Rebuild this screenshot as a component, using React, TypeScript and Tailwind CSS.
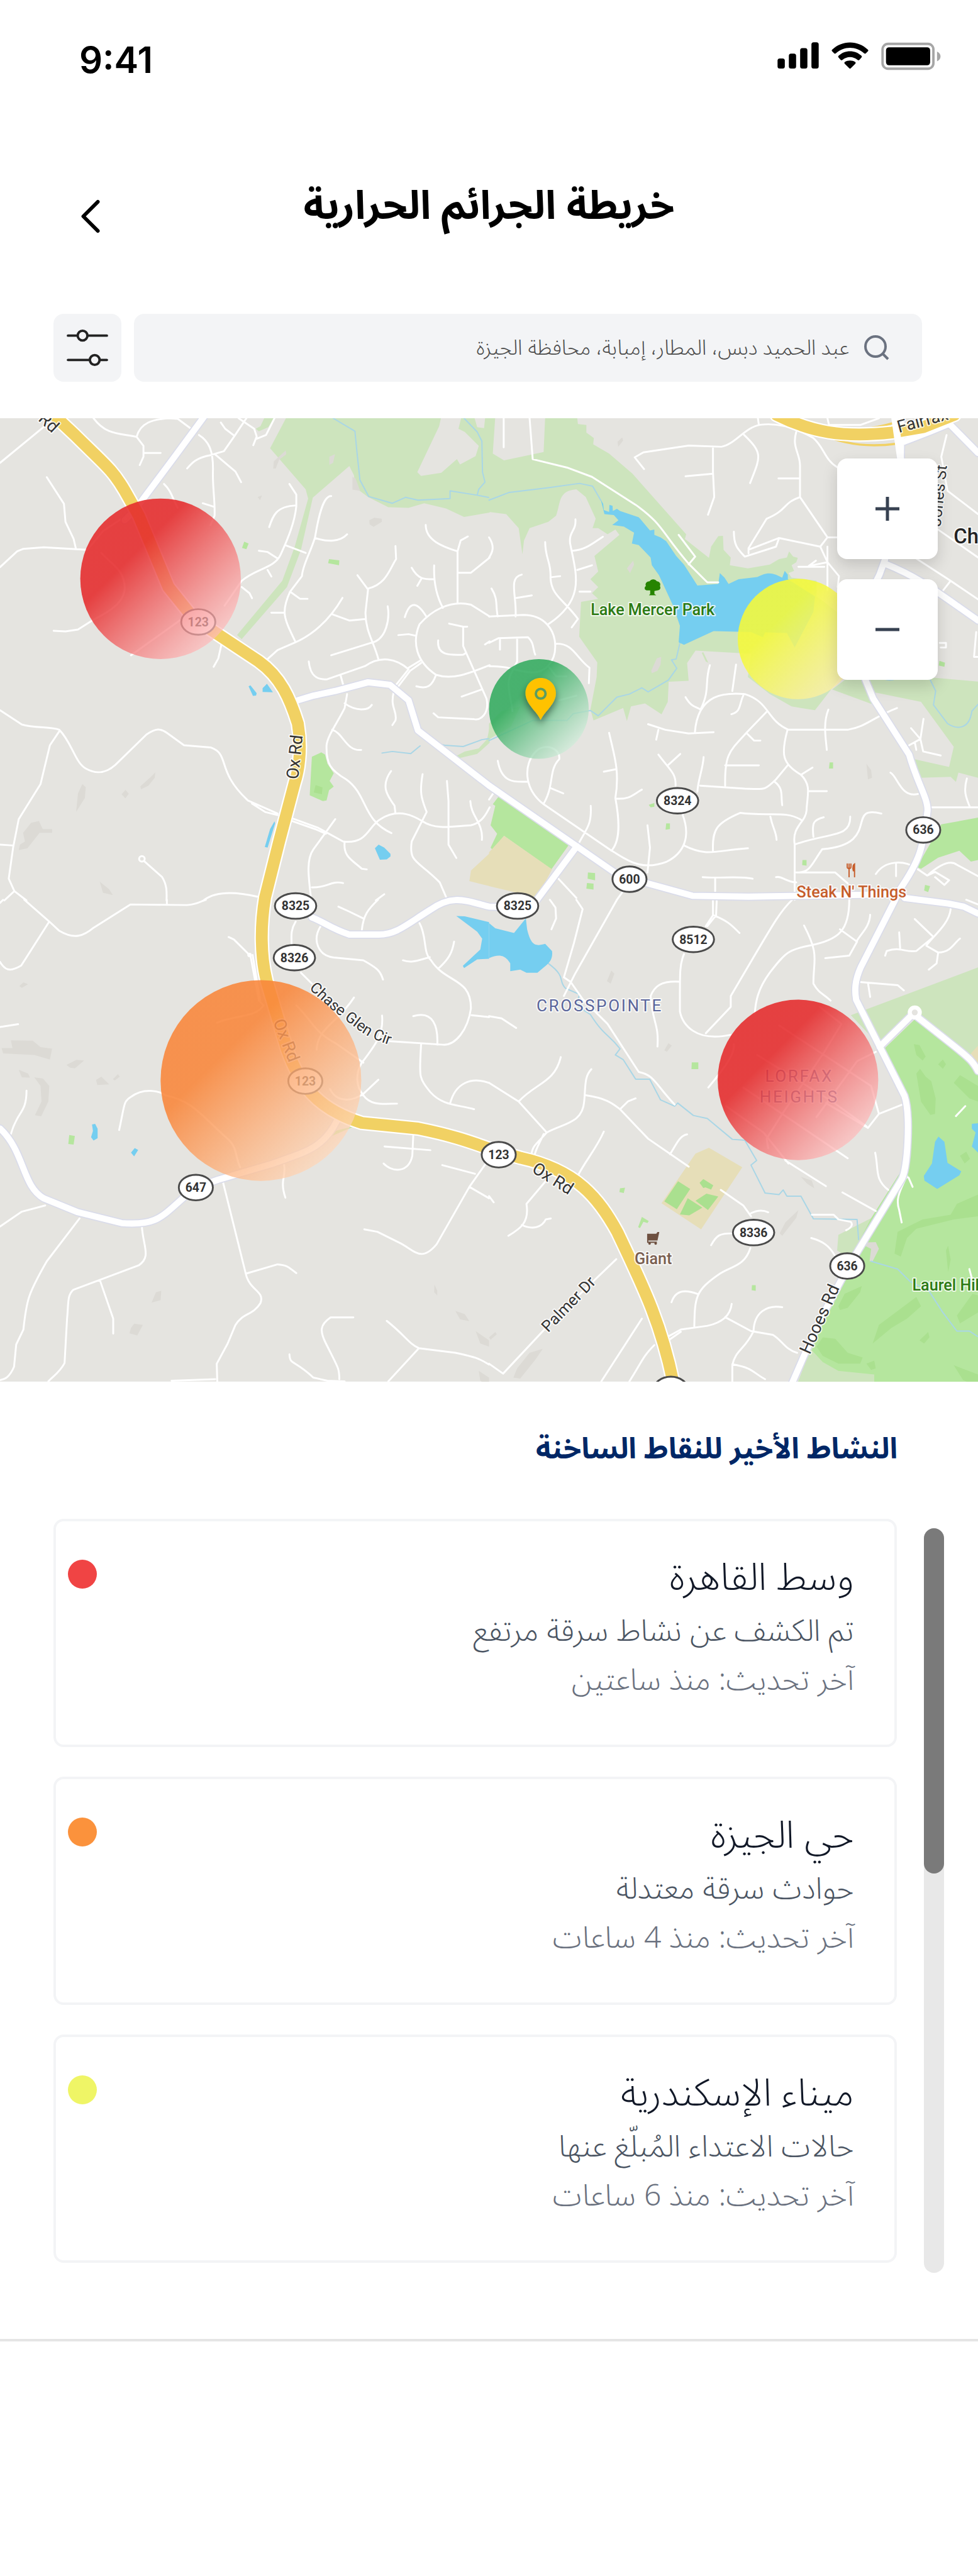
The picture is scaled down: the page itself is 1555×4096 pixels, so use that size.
import React from "react";

/* ---------- Map data: four tiles, each 1568 x 1568 units ---------- */

type Tile = {
  park?: string[];
  grass?: string[];
  grassDark?: string[];
  sand?: string[];
  land?: string[];
  water?: string[];
  stream?: string[];
  building?: string[];
  road?: string[];
};

const TILES: { x: number; y: number; t: Tile }[] = [
  {
    x: 0,
    y: 0,
    t: {
      park: [
        "M920 10L866 113L980 245L988 275L945 430L905 540L760 715L775 728L920 560L965 440L1003 272L1120 170L1135 200L1140 240L1180 270L1245 303L1310 305L1360 290L1430 307L1488 334L1570 320V10Z",
        "M850 10L835 42L820 50L830 58L860 45L882 10Z",
        "M1570 1010L1562 1050L1535 1080L1490 1090L1462 1105L1470 1112L1530 1098L1570 1062Z",
      ],
      land: [
        "M1415 10L1408 42L1338 190L1350 202L1415 192L1465 148L1475 165L1525 138L1535 105L1490 60L1470 50L1480 10Z",
        "M1520 10L1530 45L1552 48L1556 10Z",
      ],
      grass: [
        "M1000 1107L1030 1093L1042 1100L1050 1130L1070 1160L1057 1185L1070 1203L1055 1215L1047 1248L1035 1250L993 1231Z",
        "M783 414L797 420L790 438L776 434Z",
        "M1055 470L1088 474L1087 490L1052 483Z",
      ],
      grassDark: ["M1012 1198L1034 1206L1032 1228L1006 1222Z"],
      sand: ["M1570 1418L1510 1474L1505 1508L1570 1524Z"],
      water: [
        "M797 880L803 877L823 902L821 910L811 911Z",
        "M842 898V886L856 872L875 899Z",
        "M880 1315L866 1340L849 1398L858 1400L882 1322Z",
        "M1202 1402L1214 1390L1232 1400L1252 1420V1428L1240 1438L1218 1439Z",
      ],
      stream: [
        "M1068 16L1138 58L1144 120L1154 215L1182 268L1258 290L1300 271L1340 280L1443 275V250L1530 264L1535 245L1555 222L1547 190L1545 90L1530 60L1488 16",
        "M1530 264L1570 272",
        "M1225 1095L1258 1090L1317 1097L1347 1072",
        "M1395 1062L1425 1070L1485 1074L1545 1052L1570 1048",
      ],
      building: [
        "M878 155L916 120L918 132L895 150L884 178L876 178Z",
        "M1184 345L1200 337L1224 340V350L1198 366L1185 358Z",
        "M264 1195L275 1205L272 1240L244 1285L250 1225Z",
        "M450 1202L486 1170L498 1157L496 1175L476 1200L452 1212Z",
        "M390 1228L402 1214L413 1226L402 1241Z",
        "M100 1320L125 1314L137 1340L167 1340V1352L127 1352L88 1402L60 1408L64 1390L80 1380L74 1352Z",
        "M320 1510L350 1534L362 1553L330 1545Z",
        "M1130 205L1140 210L1155 250L1130 246Z",
        "M1056 140L1074 132L1068 160L1056 166Z",
        "M826 270L840 265L834 280Z",
      ],
      road: [
        "M0 160L145 40",
        "M300 16C340 70 380 64 438 76C450 30 490 20 540 16L570 18L610 48",
        "M438 76L460 105V140L448 167M460 128H515",
        "M708 30L722 50L752 73",
        "M790 16L752 73L718 122L675 135C630 143 615 160 600 178",
        "M638 70C670 90 683 120 683 180C680 230 690 280 688 330L675 360",
        "M650 290L688 302",
        "M690 133L755 188L773 222",
        "M765 16L815 50L823 75L812 103M880 16L853 70L823 82",
        "M150 206L205 292L210 350L236 405L243 435",
        "M0 496L55 445L75 437L140 432L280 440",
        "M172 701L210 703L250 697L300 665C350 640 400 610 400 560C395 500 360 490 325 450M280 440L330 380L420 320",
        "M526 228C550 250 555 280 570 305",
        "M710 745L700 790L685 817",
        "M420 780L580 665",
        "M928 228L950 262V300C945 350 925 400 900 455C880 500 820 500 775 540M863 367C875 330 885 300 950 297M830 443L858 447L890 468M858 505L870 526",
        "M775 560L800 580L808 596",
        "M720 620L775 540",
        "M1062 267C1035 265 1020 340 1010 400C995 450 970 490 968 525L930 575C900 640 910 660 948 738",
        "M1010 402C1050 415 1090 415 1113 390M930 575L962 598H986M870 643H908M915 425L980 450",
        "M858 792L890 763L948 738C1010 710 1060 660 1098 595",
        "M1066 648L1120 668L1172 663M1062 780L1190 740C1240 730 1250 660 1243 622",
        "M1146 522L1180 568L1172 640C1170 700 1200 740 1213 792",
        "M1180 565C1240 550 1250 500 1270 470L1268 428",
        "M990 800C995 850 1020 860 1050 857L1170 815C1220 780 1270 790 1310 825",
        "M1092 845L1103 885",
        "M1365 360C1365 410 1420 430 1467 445V612M1467 445L1477 410L1500 397M1467 514H1510L1570 465",
        "M1392 490C1390 540 1400 590 1420 627M1320 498C1340 535 1360 535 1390 535M1352 532L1338 556",
        "M1298 657C1315 600 1340 610 1368 657",
        "M1570 655L1510 617C1440 600 1380 640 1345 680C1320 740 1335 800 1398 843C1450 860 1500 840 1570 812",
        "M1277 715L1310 712L1333 717M1440 678L1485 688H1498M1485 688V750L1560 920C1570 970 1540 990 1520 986L1405 980L1390 967",
        "M1405 732C1400 780 1440 780 1485 778L1495 772M1555 745L1570 735",
        "M1310 825L1270 875M1348 797L1310 820M1350 805L1315 830L1277 880M1398 843C1385 880 1370 890 1335 880M1480 913L1545 890",
        "M1262 900C1250 950 1275 960 1268 990L1258 1005",
        "M1113 905L1105 950C1080 1000 1050 1040 1047 1070C1045 1130 1060 1150 1110 1180C1180 1230 1160 1310 1255 1353",
        "M1105 935C1140 960 1180 960 1192 940M1065 1020C1100 1030 1110 1090 1158 1085",
        "M0 957L70 1003C110 1015 165 1010 190 1020C230 1060 240 1125 275 1145C310 1165 340 1160 370 1133L470 1035C500 1015 515 1015 535 1030L590 1070L675 1077C740 1100 690 1150 795 1248L890 1290",
        "M935 1305L1018 1335L1100 1380C1180 1390 1180 1330 1220 1308C1280 1270 1330 1300 1355 1315C1400 1345 1460 1330 1510 1328C1545 1320 1560 1290 1570 1270",
        "M808 1258L850 1285L890 1295M930 1312L1010 1340L1045 1355",
        "M190 1025L160 1070L130 1195L60 1308L42 1400L28 1500L46 1540L85 1570M46 1540L14 1570M0 1390L42 1393",
        "M463 1444L520 1495C535 1520 535 1540 534 1570",
        "M1075 1308L1045 1350L1005 1405C980 1440 990 1500 998 1570M1000 1528C1050 1530 1060 1505 1100 1514",
        "M1105 1382C1100 1430 1130 1440 1160 1468L1176 1470",
        "M1254 1153C1220 1200 1240 1230 1265 1265L1268 1290M1355 1163C1345 1220 1350 1240 1368 1285L1320 1380C1310 1450 1340 1440 1410 1512L1435 1570",
        "M1433 1185L1438 1250V1390L1463 1433M1508 1250C1510 1300 1550 1320 1545 1375",
        "M655 1568C700 1535 770 1545 825 1558M1232 1550L1205 1570",
      ],
    },
  },
  {
    x: 1568,
    y: 0,
    t: {
      park: [
        "M0 10H20L12 130L48 152L175 125L180 10H282L285 35L312 38V62L336 80L334 100L385 130L460 195L632 390L628 405L705 466L712 430L735 396L750 395L752 440L775 465L772 490L830 500L900 488L930 470L955 465L962 445L975 462L990 466L985 480L970 490L978 508L960 515L970 530L1050 540V590L1180 690L1120 860L1045 957L970 945L900 905L830 850L840 775L662 765L635 805L640 862L576 865L573 930L553 970L500 935L455 945L442 992L430 950L335 990L325 955L345 850L347 803L289 720L295 608L350 598L330 580L350 560L325 535L350 510L338 460L418 392L405 375L380 390L350 370L332 370L342 340L310 270L280 245C220 250 230 290 215 330L190 350L130 370L112 410L107 455L95 370L55 325L0 318Z",
        "M1100 890L1180 830L1380 848L1568 865V1175L1505 1158L1497 1188L1480 1172L1380 1175L1365 1115L1475 1140L1490 1075L1385 930L1240 900L1230 938Z",
        "M0 1000L40 960L100 945L70 1010L0 1050Z",
        "M687 770L703 804L695 800L682 772Z",
      ],
      land: ["M185 10L137 66V50L150 40V10Z"],
      grass: [
        "M30 1236L255 1392L200 1470L48 1362L12 1408L5 1400L26 1355L5 1328L20 1265L12 1260Z",
        "M1450 1325L1568 1303V1440L1545 1445L1508 1410L1440 1432L1385 1468L1372 1462Z",
        "M1444 798L1462 804L1460 817L1442 813Z",
        "M1092 1125H1103V1145H1090Z",
        "M568 1322H580V1340L566 1342Z",
        "M317 1480L340 1482V1505L316 1500ZM314 1514L335 1516V1535L312 1532ZM10 1422L33 1430L22 1448L6 1440Z",
        "M1005 1440H1018V1458L1004 1456ZM1398 1520L1414 1524L1408 1543L1395 1538Z",
        "M512 1262L530 1256V1268L518 1270Z",
      ],
      sand: ["M48 1362L202 1470L150 1568L100 1548L0 1524V1415Z"],
      water: [
        "M358 278L366 292L368 312L385 318L386 295L396 298L397 315L410 308L420 315L480 335L516 378L530 375L530 392L550 400L568 412L600 460L625 488L668 555L735 550L740 515L755 530L768 550L800 535L860 528C900 505 920 520 940 530L948 508L958 520V535L1045 590L1040 640L980 755L955 708L885 706L878 722L840 705L720 702L625 746L608 738L612 685L590 620L545 522L522 490L518 465L480 425L458 420L465 385L432 365L395 360L415 345L400 328L370 325Z",
      ],
      stream: [
        "M0 280L65 255L190 240L290 226L332 235L358 280M612 740L600 792L585 795L602 822L575 860L510 898L490 885L450 905L410 915L350 975L325 958L270 968L250 990H140L0 1055",
        "M1415 860L1432 895L1425 940L1470 1000C1500 1020 1540 1020 1548 960L1568 938",
        "M1250 850C1280 865 1300 860 1310 850",
      ],
      building: [
        "M412 92L427 78L430 88L414 108Z",
        "M442 500L462 475L465 488L452 515Z",
        "M520 830L538 790L552 785L550 810L540 830L522 838Z",
        "M1210 1130L1225 1150L1228 1175L1215 1180Z",
      ],
      road: [
        "M47 16V110M130 16L140 148L250 175L330 205L470 295C560 360 550 380 640 485L700 545H735",
        "M608 392L661 462L640 487",
        "M497 180L467 142L495 126L640 104L745 108C790 100 820 45 870 37C930 30 990 50 1040 80C1075 110 1075 150 1118 175",
        "M865 37L862 16M818 70C880 130 870 140 837 225M718 108V190L722 270L702 327M630 203L718 195M985 60C970 110 998 130 997 170V270L1085 400H1118M928 210H995",
        "M997 270C940 290 960 310 890 340L832 435V452M785 382C785 430 800 440 820 462L920 430L930 402L832 440M930 402L1062 430L1085 400",
        "M1062 430L1085 480V570M1085 430V480L1122 525L1118 560M1085 480L1025 492L1048 475M992 495H1075",
        "M277 342C280 380 255 380 260 420C280 520 310 600 190 680M180 415C180 470 200 480 197 530C200 590 240 600 285 663L265 690M268 443C310 440 330 420 365 398M283 505L330 490M290 575L325 575M202 528L228 525M105 520C60 530 90 590 85 655M88 595L137 587M8 565C30 600 20 620 28 655",
        "M0 655L110 650C180 650 210 700 212 745C215 800 180 840 130 835C80 830 70 815 0 815M0 740L30 725L125 722C145 740 140 760 148 778M35 730V762M90 725V800L75 830C50 870 70 910 75 960",
        "M215 743C270 740 280 790 322 820L320 870M190 815L215 848H248M225 925L280 910",
        "M0 400C20 430 10 450 0 465",
        "M510 1002L565 1020L640 1032L720 1028M543 1020L536 1052M660 1028C670 900 760 900 820 905C900 930 890 990 960 1020H1150C1210 1010 1230 980 1308 950M708 812C690 870 710 890 678 955M630 915C650 950 665 945 678 955M792 810L780 895M817 905C800 940 810 960 777 970",
        "M892 960L825 1030C770 1090 755 1100 757 1200M825 1030L850 1055H870M757 1135H865M1088 955C1070 1000 1080 1050 1083 1085",
        "M957 1020C935 1100 940 1130 1000 1165C1035 1200 1020 1230 1018 1280C1015 1320 970 1330 980 1390V1568M957 1135L920 1180C880 1220 880 1210 820 1210L677 1200M1000 1165L1037 1142M1023 1218H1083M915 1187C945 1210 935 1230 940 1263",
        "M385 1030C400 1100 420 1150 405 1240C420 1320 420 1380 392 1410M368 1155L408 1147M408 1242C450 1245 460 1230 490 1213M543 1100C580 1150 600 1160 598 1200M575 1133L613 1098M688 1108C685 1150 670 1180 668 1220M620 1292C650 1370 620 1420 570 1445C480 1480 430 1430 390 1408L175 1260C110 1210 110 1130 150 1090C180 1060 230 1080 225 1115C190 1150 210 1200 175 1258M28 1120C40 1190 80 1190 125 1187M197 1208L238 1225",
        "M326 1265C330 1330 310 1340 283 1395M508 1328L516 1400L508 1480M625 1393C700 1430 720 1410 830 1402M718 1412C715 1340 730 1320 805 1288C900 1300 950 1280 1000 1310M902 1300C910 1340 920 1345 922 1375",
        "M980 1390C1090 1350 1160 1370 1158 1300M1040 1365C1035 1320 1040 1310 1073 1302M1258 1290C1140 1260 1260 1390 1068 1405C1030 1460 1030 1480 985 1480H1110L1150 1515M685 1495C740 1500 800 1490 845 1500M725 1500V1540M920 1495C940 1490 950 1510 985 1512",
        "M1240 1485C1270 1440 1330 1440 1368 1465M1305 1450V1492M1368 1465L1405 1490C1450 1450 1480 1440 1500 1455L1568 1492M1405 1490L1430 1478L1475 1505L1460 1520L1430 1495M0 1245L20 1215M215 1492L280 1562M430 1540L410 1568",
        "M1287 1158C1310 1170 1320 1240 1375 1227M1532 1177C1520 1220 1530 1240 1542 1270M1420 1270H1568M1393 985L1383 1050L1392 1090L1448 1103M1353 1015L1383 1050L1347 1070M1365 1060L1370 1085",
        "M1467 70L1450 140L1470 250L1568 325M1440 375L1568 465M1368 467L1480 540L1568 600M1480 540L1455 572M1445 740H1465V755H1448M1562 705L1555 785H1568",
        "M1085 16L1090 38H1190L1250 16",
      ],
    },
  },
  {
    x: 0,
    y: 1568,
    t: {
      water: [
        "M295 724L305 722L313 738V768L300 776L292 765L298 745Z",
        "M420 815L432 800L443 806L430 827Z",
        "M1463 52L1490 53L1568 72V190L1530 192L1488 220L1484 213L1540 160L1546 125L1530 103Z",
      ],
      grass: ["M222 758L240 761L236 789L219 787Z", "M1062 762L1140 728L1075 745Z"],
      building: [
        "M5 478L40 478L35 453L105 454L130 475L167 480L160 515L110 500L10 495Z",
        "M213 532L245 516L270 518L240 543L225 541Z",
        "M60 548L90 560L96 573L70 572Z",
        "M110 572L138 576L158 600L155 650L132 698L112 694L133 650L130 600Z",
        "M308 580L325 570L350 595L312 597Z",
        "M362 578L378 562L384 570L368 582Z",
        "M62 278L75 266L90 272L70 284Z",
        "M420 1380L430 1366L458 1370L440 1404L415 1397Z",
        "M486 1298L500 1265L517 1260L515 1290Z",
        "M1460 1325L1490 1335L1505 1358L1475 1352Z",
        "M1393 1240L1402 1260V1275L1392 1265Z",
        "M1525 1390L1568 1420V1440L1540 1430Z",
        "M1535 1518L1568 1540V1568L1540 1550Z",
      ],
      road: [
        "M78 0L158 70L190 100C240 130 270 115 300 90L418 15L600 17C640 13 640 5 660 0M535 0V17M158 70L68 212C30 235 15 225 0 200M0 10L10 0",
        "M733 120L750 128L800 178M0 410L58 401M85 615C85 690 55 680 35 755",
        "M382 742C400 660 395 650 420 635C460 605 510 615 530 630C620 650 640 690 735 775C760 800 755 830 770 862",
        "M696 396C760 370 820 380 845 340L830 325L803 180M810 178L835 330",
        "M948 70C930 100 935 120 935 145M965 235L1000 270M1028 85C1000 130 1020 180 1070 186L1165 195C1210 220 1220 230 1228 257M1085 22L1120 38L1165 60M1212 0C1180 30 1165 50 1160 98",
        "M1345 75C1370 120 1355 170 1382 195C1430 270 1510 250 1510 350C1500 420 1460 470 1420 467L1240 455M1292 195C1320 205 1340 195 1378 185M1405 222C1440 190 1450 170 1456 135M1512 372L1568 378M1325 375C1390 355 1405 410 1402 467",
        "M1350 467C1345 570 1340 570 1380 620C1420 665 1470 660 1520 675M1443 657C1460 590 1510 570 1568 590M1225 373C1230 430 1210 460 1160 525C1140 560 1140 600 1165 630C1190 665 1230 657 1273 657M1213 580L1160 630",
        "M950 340C1010 400 1000 420 1080 465L1165 525M1135 315C1080 400 1020 410 1015 483M1058 610C1080 655 1130 650 1165 625",
        "M1325 760L1322 825C1310 880 1260 880 1230 850M1233 795L1380 807M1568 835L1505 925L1400 1110C1350 1170 1330 1130 1280 1105L1210 1070L1168 1062M1505 925L1568 962M1418 855L1523 883",
        "M910 850C920 890 895 900 915 960",
        "M715 910L788 1205C800 1260 850 1260 835 1300C810 1340 780 1330 755 1370L730 1430L695 1495L697 1568M788 1205L890 1175C925 1178 925 1185 950 1203",
        "M455 1055C460 1120 485 1150 445 1178L320 1225L235 1257C215 1275 220 1300 215 1350L207 1493C190 1525 170 1535 155 1552M320 1225L363 1350V1398",
        "M255 1027L150 1165C90 1270 85 1290 75 1385L52 1433L45 1505C30 1540 15 1545 0 1548M145 985L70 1005L0 1053",
        "M928 1465C930 1500 940 1480 1005 1540L1050 1550L1105 1552M1133 1346H1060C1025 1370 1025 1390 1045 1430C1085 1510 1088 1510 1088 1545M1240 1357C1300 1405 1310 1430 1343 1445L1460 1460C1530 1475 1540 1480 1568 1498M1343 1445L1245 1552M550 1550L690 1545",
      ],
    },
  },
  {
    x: 1568,
    y: 1568,
    t: {
      park: [
        "M1160 372L1568 218V490L1540 500L1365 380L1262 480Z",
        "M1120 1080L1225 1026L1210 1080L1160 1160L1116 1130Z",
        "M1110 1240L1240 1400V1568H985Z",
      ],
      grass: [
        "M1365 385L1540 500L1568 560V1568H1235V1530L1120 1518L1070 1490L1035 1452L1120 1230L1225 1026L1330 860L1345 660L1262 485Z",
        "M650 524H671V546H649Z",
        "M420 930L436 928L432 945L418 942ZM478 1055L490 1022L512 1035L508 1042L495 1038L484 1058ZM843 1242H855V1260L842 1258Z",
      ],
      grassDark: [
        "M1370 560L1382 545L1400 570L1418 585L1432 640L1430 690L1415 693L1385 650Z",
        "M1490 590L1510 565L1568 600V650L1540 640Z",
        "M1362 465L1380 468L1400 505L1390 518L1370 500Z",
        "M1300 1140L1310 1070L1390 1030L1480 1015L1500 980L1568 950V1020L1490 1030L1370 1060L1340 1090L1320 1150Z",
        "M1230 1430L1250 1370L1370 1280L1385 1310L1340 1350L1290 1380Z",
        "M1070 1410L1110 1415L1150 1460L1198 1475L1190 1495L1120 1495L1070 1470L1050 1440Z",
        "M1120 1310L1140 1270L1195 1245L1190 1265L1150 1315L1125 1322Z",
        "M1490 1500L1568 1530V1568L1520 1548Z",
        "M1440 530L1455 515L1465 530L1455 545ZM1510 825L1530 812L1542 835L1525 850ZM1465 1130L1472 1115L1480 1160L1472 1200Z",
        "M1500 1340L1550 1270L1568 1275V1330L1510 1365ZM1380 1420L1408 1393L1412 1410L1395 1430ZM1210 1495L1235 1485L1240 1510L1225 1515Z",
      ],
      sand: [
        "M705 799L812 862L680 1062L553 978L662 818Z",
        "M1568 470L1545 495L1568 530Z",
      ],
      water: [
        "M0 75L20 92L80 107L118 60L122 95C135 150 150 150 180 142L202 165C205 190 195 200 185 210L155 235L120 235L100 225L68 230V205C50 175 30 175 0 188Z",
        "M1441 763L1460 780L1470 848L1514 875L1508 888L1437 932L1396 905L1394 890L1420 850L1430 780Z",
        "M1568 720L1548 722V738L1560 750L1548 795L1568 815Z",
      ],
      land: ["M5 115L35 132L70 140L45 150L10 152Z"],
      stream: [
        "M190 205C250 250 220 260 245 285L290 305L280 340L325 370C370 440 380 430 420 480L405 500L430 515L470 578H515L550 645L595 665L605 655L655 695L700 705L780 772L820 775L858 840L840 855L885 945L930 950L943 935L955 955L1000 955L1040 1028L1180 1030L1185 1095",
        "M1225 1165L1310 1190L1350 1230L1410 1260L1455 1330L1500 1390L1540 1390L1568 1408",
      ],
      building: [
        "M378 262L392 228L402 238L390 270Z",
        "M562 485L575 462L586 470L570 490Z",
        "M1000 893L1035 905L1043 930L1020 915Z",
        "M932 1075L950 1040L992 1000L985 1025L940 1083Z",
        "M78 1540L90 1510L130 1460L172 1447L150 1480L100 1543Z",
        "M1185 1105L1240 1103L1250 1125L1230 1165L1220 1165L1225 1125Z",
        "M0 1410L20 1393L25 1400L5 1418Z",
      ],
      road: [
        "M195 0L213 25L215 60L200 95M280 0L300 30L272 140L240 250L262 265L300 320L380 400L480 555C530 565 530 590 595 660M410 0L275 240L240 310M718 0V50L695 85M730 0L728 50L700 85M720 50C770 70 780 85 803 107",
        "M972 0C930 40 910 80 775 310V345L695 430M625 175C610 210 612 240 612 360C620 400 660 460 775 435M612 264C550 260 530 280 518 310C525 400 545 400 540 473",
        "M1155 0C1155 100 1120 130 1030 147C960 160 950 170 900 235C860 290 855 330 852 365M1010 83C1060 180 1040 190 1040 270C1060 305 1070 300 1095 325M1125 95L1180 135L1155 180L1078 188M1222 48C1220 90 1190 110 1178 135",
        "M1365 62L1425 120L1370 165C1330 170 1320 150 1275 165L1270 180M1480 30C1475 80 1420 120 1402 148L1440 170C1480 170 1490 140 1510 125M1440 170L1435 205L1410 225M1315 105L1318 155M1530 0L1568 15M1190 265L1310 275L1330 292M1215 268L1222 313",
        "M0 375L40 382L87 413M0 590L95 650L185 750M95 650C150 590 210 590 230 507M185 750C240 720 300 720 305 650C310 600 305 570 328 546M310 630C380 640 400 660 420 675L510 770L640 860M420 675L445 650L470 640M580 820C600 790 610 760 635 756",
        "M185 750C150 790 140 790 135 825M175 755C160 790 150 800 145 828M368 747C345 800 310 840 287 885L290 910L340 960M183 905L120 980C130 1040 100 1060 62 1083M105 1048C140 1065 170 1055 182 1030L198 1027M0 955L15 975",
        "M743 935L815 985L840 1020M840 1010C860 1000 880 1000 895 1007M712 1113C730 1080 740 1075 780 1075M838 1122C820 1180 780 1180 740 1205C660 1260 660 1280 658 1378M585 1297C600 1250 640 1260 668 1270M570 1410L615 1385L700 1373C760 1360 775 1330 778 1302M757 1345L840 1390L910 1402C940 1420 950 1450 988 1460M940 1313C890 1305 850 1330 848 1390C820 1450 790 1450 780 1500V1568M780 1497C850 1510 840 1520 885 1545M575 1420L615 1392",
        "M703 605C740 560 790 500 785 465M950 840L1080 923M930 405L1225 600L1250 690L1215 735L1080 655M860 500L1100 650L1210 730M815 605L1150 833M760 665L880 750L960 850M1060 345L1130 400L1075 490L940 690L890 770L895 800M1240 490L1180 520L1050 700M1250 690L1325 660M1238 815C1250 870 1235 900 1280 935M1133 943L1240 1003M1033 1090C1070 1100 1090 1115 1108 1145",
        "M1035 1015H1105L1120 1030L1160 1038C1170 1050 1155 1060 1145 1065M1340 890C1310 950 1305 970 1315 1000L1323 1040M1330 890L1345 895L1358 925M1497 697L1527 665",
        "M408 1158L210 1350L45 1527L0 1495M490 1350L360 1552M530 1435C490 1475 490 1490 450 1552M1540 1190L1548 1220",
      ],
    },
  },
];

const MAJOR = [
  // white connector into the yellow highway, top left
  "M655 10L560 140L430 315L400 345",
  // 600 corridor
  "M955 925L1005 910L1075 895L1180 867L1250 875L1310 925L1340 1022L1568 1200L1985 1490L2220 1555L2400 1558L2880 1550",
  "M3136 1612L3090 1590L3040 1580L2900 1562",
  "M1850 1395L1720 1570C1680 1600 1640 1590 1568 1590C1490 1570 1450 1550 1380 1600C1300 1650 1270 1680 1215 1680H1120C1060 1660 1040 1640 1000 1625",
  // 636
  "M2890 16L2888 150M2838 470L2820 520L2780 600M2775 860L2800 920L2915 1100C2940 1190 2975 1240 2974 1280C2960 1400 2950 1440 2885 1535L2870 1568L2760 1785C2740 1830 2740 1860 2745 1890L2900 2200C2920 2260 2910 2440 2890 2470L2720 2750L2620 2940L2540 3125",
  "M3045 35L3136 128M2890 95L2980 60L3040 35",
  "M2838 485C2950 530 3010 580 3136 668",
  "M2820 2042L2928 1935L3060 2040C3110 2080 3120 2090 3136 2120",
  // 647
  "M0 2305C80 2380 70 2490 140 2530L250 2575L390 2610C520 2620 520 2580 628 2495L700 2470L870 2420C980 2380 1040 2370 1085 2270",
];

const HIGHWAY = [
  "M150 -15L240 70C330 160 360 180 400 250L445 330L540 560L620 660L830 800C900 850 930 920 955 1000C970 1090 955 1160 945 1190L895 1380L850 1560C835 1650 835 1750 855 1830L920 2050C960 2160 1010 2240 1160 2287L1340 2305C1440 2325 1500 2345 1568 2370L1670 2400C1850 2440 1920 2530 1980 2640C2060 2810 2120 2930 2160 3130",
  "M2490 5C2600 60 2700 80 2860 62L2960 45L3060 5",
];

const RAMPS = ["M2540 30C2640 70 2720 120 2875 98", "M2650 50C2740 60 2800 50 2870 30"];

const SHIELDS: { n: string; x: number; y: number }[] = [
  { n: "123", x: 326, y: 335 },
  { n: "8324", x: 1114, y: 629 },
  { n: "636", x: 1518, y: 677 },
  { n: "600", x: 1035, y: 758 },
  { n: "8325", x: 851, y: 802 },
  { n: "8325", x: 486, y: 802 },
  { n: "8326", x: 484, y: 887 },
  { n: "8512", x: 1140, y: 857 },
  { n: "123", x: 502, y: 1090 },
  { n: "647", x: 322, y: 1265 },
  { n: "123", x: 820, y: 1211 },
  { n: "8336", x: 1239, y: 1339 },
  { n: "636", x: 1393, y: 1394 },
];

const MAP_FONT = "font-['Roboto','Liberation_Sans',sans-serif]";

function Label({
  x,
  y,
  rotate = 0,
  size = 26,
  color = "#333333",
  weight = 400,
  anchor = "middle",
  spaced = false,
  children,
}: {
  x: number;
  y: number;
  rotate?: number;
  size?: number;
  color?: string;
  weight?: number;
  anchor?: "start" | "middle" | "end";
  spaced?: boolean;
  children: string;
}) {
  return (
    <text
      x={x}
      y={y}
      transform={`rotate(${rotate} ${x} ${y})`}
      fontSize={size}
      fontWeight={weight}
      fill={color}
      stroke="#ffffff"
      strokeOpacity={0.75}
      strokeWidth={4}
      strokeLinejoin="round"
      paintOrder="stroke"
      textAnchor={anchor}
      className={spaced ? "tracking-widest" : undefined}
    >
      {children}
    </text>
  );
}

function Fade({ id, from, to, end }: { id: string; from: string; to: string; end: number }) {
  return (
    <linearGradient id={id} x1="0" y1="0" x2="1" y2="1">
      <stop offset="0.34" stopColor={from} stopOpacity="0.88" />
      <stop offset="0.86" stopColor={to} stopOpacity={end} />
    </linearGradient>
  );
}

function HeatMap() {
  return (
    <svg
      viewBox="0 0 1608 1584"
      preserveAspectRatio="xMidYMid slice"
      className={`block w-full [direction:ltr] ${MAP_FONT}`}
      role="img"
      aria-label="خريطة"
    >
      <defs>
        <Fade id="heat-red" from="#e52a2b" to="#ffbcbc" end={0.7} />
        <Fade id="heat-orange" from="#f9863a" to="#ffd8ba" end={0.72} />
        <Fade id="heat-yellow" from="#f5f93a" to="#fff0a6" end={0.75} />
        <Fade id="heat-green" from="#33ab5f" to="#d2ecdb" end={0.75} />
        <filter id="pin-shadow" x="-50%" y="-30%" width="200%" height="180%">
          <feDropShadow dx="0" dy="7" stdDeviation="6" floodColor="#000000" floodOpacity="0.45" />
        </filter>
        <path id="chase-glen" d="M508 938L545 972L590 1006C606 1018 622 1026 680 1042" />
      </defs>
      <rect width="1608" height="1584" fill="#e5e4e0" />

      <g transform="scale(0.5128 0.5102) translate(0 -16)" strokeLinecap="round" strokeLinejoin="round">
        {TILES.map(({ x, y, t }) => (
          <g key={`${x}-${y}`} transform={`translate(${x} ${y})`}>
            <path d={t.park?.join("")} fill="#cde4bd" />
            <path d={t.land?.join("")} fill="#e5e4e0" />
            <path d={t.grass?.join("")} fill="#b5e69e" />
            <path d={t.grassDark?.join("")} fill="#aae08f" />
            <path d={t.sand?.join("")} fill="#e6deb8" />
            <path d={t.building?.join("")} fill="#dcdad5" />
            <path d={t.stream?.join("")} fill="none" stroke="#a9d6e6" strokeWidth="4" />
            <path d={t.water?.join("")} fill="#75cef0" />
          </g>
        ))}
        <path
          d="M2174 2475L2213 2500L2170 2565L2130 2540ZM2205 2530L2252 2560L2210 2585L2180 2582ZM2230 2538L2265 2515L2303 2524L2270 2568ZM2243 2480L2255 2468L2287 2488L2280 2502L2262 2495L2255 2497Z"
          fill="#aae08f"
        />
        {TILES.map(({ x, y, t }) => (
          <g key={`r${x}-${y}`} transform={`translate(${x} ${y})`}>
            <path d={t.road?.join("")} fill="none" stroke="#ffffff" strokeWidth="6" />
          </g>
        ))}
        <circle cx="455" cy="1436" r="9" fill="#e5e4e0" stroke="#ffffff" strokeWidth="6" />
        <circle cx="800" cy="1746" r="7" fill="#ffffff" />
        <path d={MAJOR.join("")} fill="none" stroke="#dadcea" strokeWidth="27" />
        <path d={MAJOR.join("")} fill="none" stroke="#ffffff" strokeWidth="20" />
        <circle cx="2933" cy="1931" r="16" fill="#e5e4e0" stroke="#ffffff" strokeWidth="13" />
        <path d={RAMPS.join("")} fill="none" stroke="#f1d163" strokeWidth="7" />
        <path d={HIGHWAY.join("")} fill="none" stroke="#ffffff" strokeWidth="47" />
        <path d={HIGHWAY.join("")} fill="none" stroke="#f1d163" strokeWidth="38" />
        <path d="M2868 10L2888 150" stroke="#ffffff" strokeWidth="22" />
      </g>

      {SHIELDS.map((s) => (
        <g key={`${s.x}-${s.y}`}>
          <ellipse
            cx={s.x}
            cy={s.y}
            rx={s.n.length > 3 ? 34 : 28}
            ry="21"
            fill="#ffffff"
            stroke="#4a4a4a"
            strokeWidth="3"
          />
          <text x={s.x} y={s.y + 7} fontSize="20" fontWeight="700" fill="#333333" textAnchor="middle">
            {s.n}
          </text>
        </g>
      ))}
      <ellipse cx="1103" cy="1597" rx="28" ry="21" fill="#ffffff" stroke="#4a4a4a" strokeWidth="3" />

      <Label x={74} y={14} rotate={43} size={28}>Rd</Label>
      <Label x={494} y={558} rotate={-84} size={28}>Ox Rd</Label>
      <Label x={462} y={1026} rotate={69} size={28}>Ox Rd</Label>
      <Label x={904} y={1258} rotate={32} size={28}>Ox Rd</Label>
      <Label x={1478} y={24} rotate={-15} size={28} anchor="start">Fairfax</Label>
      <Label x={1557} y={78} rotate={-84} size={26} anchor="end">Jones St</Label>
      <Label x={1568} y={206} size={34} color="#222222" weight={500} anchor="start">Ch</Label>
      <Label x={1073} y={324} size={26} color="#2c7a14" weight={500}>Lake Mercer Park</Label>
      <Label x={1400} y={788} size={26} color="#c65d2b" weight={500}>Steak N' Things</Label>
      <Label x={986} y={975} size={27} color="#5a659b" spaced>CROSSPOINTE</Label>
      <Label x={1314} y={1091} size={27} color="#5a659b" spaced>LORFAX</Label>
      <Label x={1314} y={1125} size={27} color="#5a659b" spaced>HEIGHTS</Label>
      <Label x={1074} y={1391} size={26} color="#7a5e50" weight={500}>Giant</Label>
      <Label x={1500} y={1434} size={26} color="#2c7a14" weight={500} anchor="start">Laurel Hill</Label>
      <Label x={941} y={1463} rotate={-46}>Palmer Dr</Label>
      <Label x={1356} y={1485} rotate={-66} size={28}>Hooes Rd</Label>
      <text
        fontSize="25"
        fill="#333333"
        stroke="#ffffff"
        strokeOpacity={0.75}
        strokeWidth={4}
        strokeLinejoin="round"
        paintOrder="stroke"
      >
        <textPath href="#chase-glen">Chase Glen Cir</textPath>
      </text>

      {/* park tree */}
      <path
        d="M1069 289V283H1064C1059 283 1059 277 1062 276C1060 271 1064 268 1068 268C1071 264 1077 264 1080 268C1084 268 1087 272 1085 276C1087 279 1085 283 1081 283L1076 284V289L1079 291H1067Z"
        fill="#268400"
      />
      {/* restaurant cutlery */}
      <g stroke="#c65d2b" strokeLinecap="round">
        <path d="M1393 733V738C1393 741 1399 741 1399 738V733M1396 733V754" fill="none" strokeWidth="2" />
        <path d="M1405 754V733C1402 735 1402 740 1403 744H1405" fill="#c65d2b" strokeWidth="2" />
      </g>
      {/* grocery cart */}
      <path d="M1064 1341H1079L1081 1338H1084L1081 1352H1066V1354H1080V1356H1064Z" fill="#6e5040" />
      <circle cx="1068" cy="1357" r="2" fill="#6e5040" />
      <circle cx="1078" cy="1357" r="2" fill="#6e5040" />

      <circle cx="264" cy="264" r="132" fill="url(#heat-red)" />
      <circle cx="1312" cy="363" r="99" fill="url(#heat-yellow)" />
      <circle cx="886" cy="478" r="82" fill="url(#heat-green)" />
      <circle cx="429" cy="1089" r="165" fill="url(#heat-orange)" />
      <circle cx="1312" cy="1088" r="132" fill="url(#heat-red)" />

      <g filter="url(#pin-shadow)">
        <path d="M889 427C875 427 864 438 864 452C864 470 881 480 889 496C897 480 914 470 914 452C914 438 903 427 889 427Z" fill="#ffc200" />
        <circle cx="889" cy="453" r="8" fill="none" stroke="#5a9d62" strokeWidth="4" />
      </g>
    </svg>
  );
}

/* ---------- Icons ---------- */

function SignalIcon() {
  return (
    <svg viewBox="120 90 204 131" className="h-[42px] w-[66px]" aria-hidden="true">
      <rect x="120" y="171" width="36" height="50" rx="11" />
      <rect x="176" y="147" width="36" height="74" rx="11" />
      <rect x="232" y="120" width="36" height="101" rx="11" />
      <rect x="288" y="91" width="36" height="130" rx="11" />
    </svg>
  );
}

function WifiIcon() {
  return (
    <svg viewBox="383 86 186 136" className="h-[43px] w-[59px]" aria-hidden="true">
      <path d="M386 124C435 75 517 75 566 124Q570 128 566 132L556 142Q552 146 547 142C507 105 445 105 405 142Q400 146 396 142L386 132Q382 128 386 124Z" />
      <path d="M418 155C450 124 502 124 534 155Q538 159 534 163L523 175Q519 179 514 175C492 156 460 156 438 175Q433 179 429 175L418 163Q414 159 418 155Z" />
      <path d="M450 186C464 176 488 176 502 186Q507 190 503 194L479 218Q476 221 473 218L449 194Q445 190 450 186Z" />
    </svg>
  );
}

function BatteryIcon() {
  return (
    <svg viewBox="627 86 295 139" className="h-[45px] w-[95px]" aria-hidden="true">
      <rect x="634" y="94" width="251" height="123" rx="27" fill="none" stroke="#a6a6a6" strokeWidth="12" />
      <rect x="651" y="111" width="218" height="89" rx="15" />
      <path d="M903 132C926 142 926 170 903 180Z" fill="#a6a6a6" />
    </svg>
  );
}

function SlidersIcon() {
  return (
    <svg viewBox="0 0 68 60" fill="none" stroke="#222222" strokeWidth="4" strokeLinecap="round" className="h-[58px] w-[66px]" aria-hidden="true">
      <path d="M2 10H17M35 10H66M2 50H36M55 50H66" />
      <circle cx="26" cy="10" r="8" />
      <circle cx="46" cy="50" r="8" />
    </svg>
  );
}

function SearchIcon() {
  return (
    <svg viewBox="0 0 40 40" fill="none" stroke="#6b7280" strokeWidth="4" className="h-10 w-10" aria-hidden="true">
      <circle cx="18" cy="18" r="16" />
      <path d="M29 29L38 38" />
    </svg>
  );
}

/* ---------- Page ---------- */

const HOTSPOTS = [
  { name: "وسط القاهرة", detail: "تم الكشف عن نشاط سرقة مرتفع", updated: "آخر تحديث: منذ ساعتين", dot: "bg-[#f04444]" },
  { name: "حي الجيزة", detail: "حوادث سرقة معتدلة", updated: "آخر تحديث: منذ 4 ساعات", dot: "bg-[#fb923c]" },
  { name: "ميناء الإسكندرية", detail: "حالات الاعتداء المُبلّغ عنها", updated: "آخر تحديث: منذ 6 ساعات", dot: "bg-[#eff566]" },
];

export default function App() {
  return (
    <div dir="rtl" className="min-h-screen w-full bg-white font-['Noto_Sans_Arabic','Noto_Sans','DejaVu_Sans',sans-serif] text-black">
      <div dir="ltr" className="flex h-[180px] items-start justify-between pr-[59px] pl-[126px]">
        <span className="mt-[60px] font-['Inter',sans-serif] text-[58px] leading-[70px] font-semibold">9:41</span>
        <div className="mt-[67px] flex items-start gap-5">
          <SignalIcon />
          <WifiIcon />
          <BatteryIcon />
        </div>
      </div>

      <header className="relative flex h-[319px] items-start justify-center pt-[100px]">
        <h1 className="text-[63px] leading-[96px] font-bold">خريطة الجرائم الحرارية</h1>
        <button type="button" aria-label="رجوع" className="absolute top-[132px] left-[122px] flex h-16 w-11 items-center justify-center">
          <svg viewBox="0 0 32 56" fill="none" stroke="#000000" strokeWidth="6" strokeLinecap="round" strokeLinejoin="round" className="h-[54px] w-8">
            <path d="M28 4L4 28L28 52" />
          </svg>
        </button>
      </header>

      <div className="flex items-center gap-5 pr-[89px] pb-[58px] pl-[85px]">
        <label className="flex h-[108px] flex-1 items-center gap-6 rounded-2xl bg-[#f3f4f6] pr-[52px] pl-8">
          <SearchIcon />
          <input
            type="text"
            aria-label="بحث"
            defaultValue="عبد الحميد دبس، المطار، إمبابة، محافظة الجيزة"
            className="h-full min-w-0 flex-1 bg-transparent text-[33px] font-light text-[#4c4c4c] outline-none"
          />
        </label>
        <button type="button" aria-label="تصفية" className="flex h-[108px] w-[108px] items-center justify-center rounded-2xl bg-[#f3f4f6]">
          <SlidersIcon />
        </button>
      </div>

      <div className="relative">
        <HeatMap />
        <div className="absolute top-16 right-16 flex flex-col gap-8">
          <button type="button" aria-label="تكبير" className="flex h-40 w-40 items-center justify-center rounded-2xl bg-white shadow-[0_10px_24px_rgba(0,0,0,0.15)]">
            <svg viewBox="0 0 38 38" stroke="#374151" strokeWidth="5" className="h-[38px] w-[38px]" aria-hidden="true">
              <path d="M0 19H38M19 0V38" />
            </svg>
          </button>
          <button type="button" aria-label="تصغير" className="flex h-40 w-40 items-center justify-center rounded-2xl bg-white shadow-[0_10px_24px_rgba(0,0,0,0.15)]">
            <svg viewBox="0 0 38 38" stroke="#374151" strokeWidth="5" className="h-[38px] w-[38px]" aria-hidden="true">
              <path d="M0 19H38" />
            </svg>
          </button>
        </div>
      </div>

      <section className="border-b-4 border-[#e5e5e5] pr-[54px] pb-[121px] pl-[85px]">
        <h2 className="pt-[76px] pr-[74px] pb-[78px] text-[46px] leading-[64px] font-bold text-[#002766]">النشاط الأخير للنقاط الساخنة</h2>
        <div className="flex items-stretch gap-[43px]">
          <div className="mt-[15px] -mb-4 w-8 rounded-full bg-[#e8e8e8]">
            <div className="h-[549px] w-full rounded-full bg-[#7a7a7a]" />
          </div>
          <ul className="flex flex-1 flex-col gap-[47px]">
            {HOTSPOTS.map((h) => (
              <li key={h.name} className="flex h-[363px] items-start justify-between rounded-2xl border-4 border-[#f3f4f6] bg-white pt-11 pr-16 pl-[19px]">
                <div>
                  <h3 className="text-[60px] leading-[92px] font-light text-[#111827]">{h.name}</h3>
                  <p className="text-[48px] leading-[78px] font-light text-[#4b5563]">{h.detail}</p>
                  <p className="text-[48px] leading-[78px] font-light text-[#6b7280]">{h.updated}</p>
                </div>
                <span className={`mt-[17px] h-[46px] w-[46px] rounded-full ${h.dot}`} />
              </li>
            ))}
          </ul>
        </div>
      </section>
      <div className="h-[358px]" />
    </div>
  );
}
